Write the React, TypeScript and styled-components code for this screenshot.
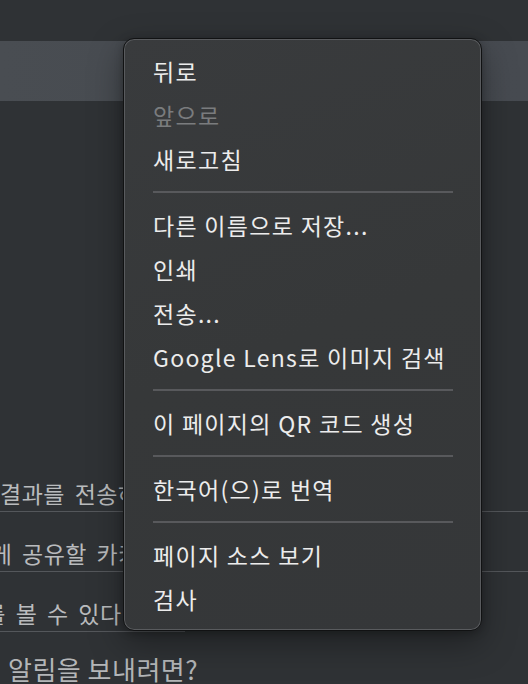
import React from "react";
import styled, { createGlobalStyle } from "styled-components";

const Global = createGlobalStyle`
  html, body {
    margin: 0;
    padding: 0;
    background: #2f3235;
    overflow: hidden;
  }
  body {
    font-family: "Noto Sans CJK KR", "Noto Sans", sans-serif;
  }
`;

const Page = styled.div`
  position: relative;
  width: 528px;
  height: 684px;
  overflow: hidden;
  background: #2f3235;
  display: flex;
  flex-direction: column;
`;

const TopGap = styled.div`
  height: 41px;
  flex: none;
`;

const Band = styled.div`
  height: 60px;
  flex: none;
  background: linear-gradient(90deg, #494d52 0%, #464a50 60%, #474b51 100%);
`;

const Content = styled.div`
  display: flex;
  flex-direction: column;
  align-items: flex-start;
  padding-top: 351px;
`;

const Row = styled.div<{ $shift: number }>`
  height: 60px;
  display: flex;
  align-items: flex-end;
  margin-left: ${(p) => -p.$shift}px;
  box-sizing: border-box;
`;

const RowText = styled.span<{ $width: number }>`
  display: inline-block;
  width: ${(p) => p.$width}px;
  overflow: hidden;
  color: #b9bbbd;
  font-size: 23px;
  letter-spacing: 0.5px;
  word-spacing: 4px;
  line-height: 30px;
  padding-bottom: 3px;
  border-bottom: 1px solid #54575b;
  white-space: nowrap;
`;

const Heading = styled.div`
  margin-top: 19px;
  margin-left: 8px;
  color: #b4b6b8;
  font-size: 26px;
  letter-spacing: 0.5px;
  line-height: 36px;
  white-space: nowrap;
`;

const Menu = styled.div`
  position: absolute;
  left: 123px;
  top: 38px;
  width: 359px;
  box-sizing: border-box;
  padding: 10px 28px 9px 29px;
  background: linear-gradient(160deg, #393b3d 0%, #363839 50%, #353739 100%);
  border: 1px solid #111213;
  border-radius: 11px;
  box-shadow: inset 0 0 0 1px #595b5e, 0 12px 34px rgba(0, 0, 0, 0.35),
    0 2px 8px rgba(0, 0, 0, 0.25);
  display: flex;
  flex-direction: column;
`;

const Item = styled.div<{ $disabled?: boolean }>`
  height: 44px;
  display: flex;
  align-items: center;
  color: ${(p) => (p.$disabled ? "#7a7c7e" : "#ececec")};
  font-size: 23px;
  letter-spacing: 1.3px;
  white-space: nowrap;
`;

const Separator = styled.div`
  height: 2px;
  margin: 10px 0;
  background: #58595c;
`;

type Entry = { label: string; disabled?: boolean } | "sep";

const entries: Entry[] = [
  { label: "뒤로" },
  { label: "앞으로", disabled: true },
  { label: "새로고침" },
  "sep",
  { label: "다른 이름으로 저장..." },
  { label: "인쇄" },
  { label: "전송..." },
  { label: "Google Lens로 이미지 검색" },
  "sep",
  { label: "이 페이지의 QR 코드 생성" },
  "sep",
  { label: "한국어(으)로 번역" },
  "sep",
  { label: "페이지 소스 보기" },
  { label: "검사" },
];

const rows = [
  { text: "결과를 전송하려면 어떻게 해야 하나요", shift: 0, width: 560 },
  { text: "에게 공유할 카카오톡 채널을 만드세요", shift: 31, width: 600 },
  { text: "카드를 볼 수 있다면 좋겠어요", shift: 59, width: 244 },
];

export default function App() {
  return (
    <Page>
      <Global />
      <TopGap />
      <Band />
      <Content>
        {rows.map((r) => (
          <Row key={r.text} $shift={r.shift}>
            <RowText $width={r.width}>{r.text}</RowText>
          </Row>
        ))}
        <Heading>알림을 보내려면?</Heading>
      </Content>
      <Menu>
        {entries.map((e, i) =>
          e === "sep" ? (
            <Separator key={i} />
          ) : (
            <Item key={i} $disabled={e.disabled}>
              {e.label}
            </Item>
          )
        )}
      </Menu>
    </Page>
  );
}
